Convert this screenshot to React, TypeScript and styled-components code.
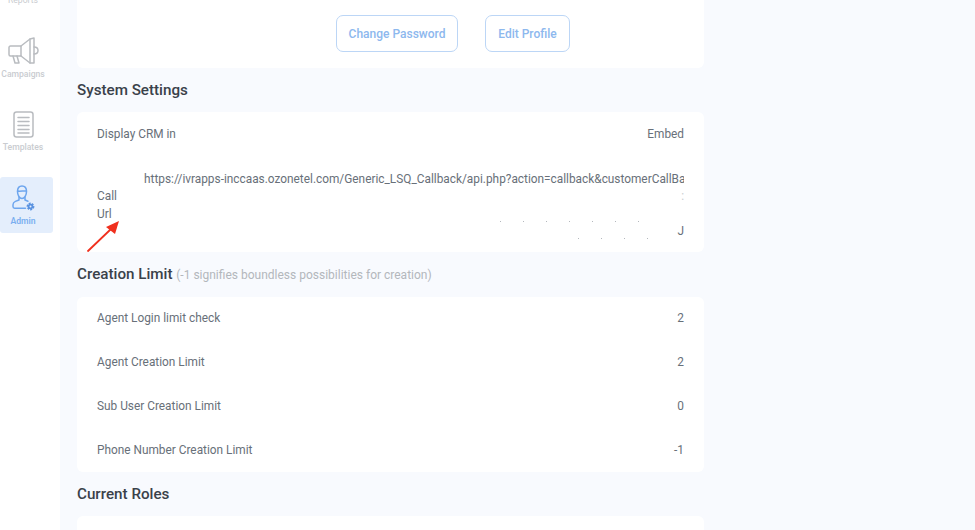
import React from "react";
import styled, { createGlobalStyle } from "styled-components";

const GlobalStyle = createGlobalStyle`
  html, body {
    margin: 0;
    padding: 0;
    background: #ffffff;
    font-family: Roboto, "Liberation Sans", sans-serif;
  }
`;

const creationLimits = [
  { label: "Agent Login limit check", value: "2" },
  { label: "Agent Creation Limit", value: "2" },
  { label: "Sub User Creation Limit", value: "0" },
  { label: "Phone Number Creation Limit", value: "-1" },
];

function CampaignIcon() {
  return (
    <svg width="31" height="28" viewBox="0 0 31 28" fill="none" stroke="#b9bcc0" strokeWidth="1.5" strokeLinejoin="round" strokeLinecap="round">
      <path d="M13 9 L2.5 9 C1.6 9 1 9.6 1 10.5 L1 17.5 C1 18.4 1.6 19 2.5 19 L13 19 Z" />
      <path d="M13 9 L22 2 L26 1 L26 26 L22 26 L13 19" />
      <path d="M22 2 L22 26" />
      <path d="M26 10 C29 10 30 12 30 13.5 C30 15 29 17 26 17" />
      <path d="M5 19 L7 26 L11 26 L9 19" />
    </svg>
  );
}

function TemplateIcon() {
  return (
    <svg width="21" height="27" viewBox="0 0 21 27" fill="none" stroke="#b9bcc0" strokeWidth="1.5" strokeLinecap="round">
      <rect x="1" y="1" width="19" height="25" rx="2.5" />
      <path d="M5 6.5 H16 M5 10.5 H16 M5 14.5 H16 M5 18.5 H16 M5 22 H16" />
    </svg>
  );
}

function AdminIcon() {
  return (
    <svg width="23" height="27" viewBox="0 0 23 27" fill="none" stroke="#6ea6ee" strokeWidth="1.5" strokeLinecap="round" strokeLinejoin="round">
      <path d="M5.5 6.5 C5.5 3 7.4 1 10 1 C12.6 1 14.5 3 14.5 6.5 C14.5 10.5 12.4 13.5 10 13.5 C7.6 13.5 5.5 10.5 5.5 6.5 Z" />
      <path d="M5.6 6 C8 6.6 12 5.6 14.4 6" />
      <path d="M7 12.5 L7 15 L3.4 16.4 C2 17 1 18.2 1 19.8 L1 21.5 C1 22.6 1.8 23.2 2.6 23.2 L13.5 23.2" />
      <path d="M13 12.5 L13 15 L16 16.2" />
      <circle cx="18.5" cy="21.5" r="2.8" fill="#5b93e0" stroke="#5b93e0" strokeWidth="2.2" strokeDasharray="1.8 1" strokeLinecap="butt" />
      <circle cx="18.5" cy="21.5" r="1" fill="#e4eefc" stroke="none" />
    </svg>
  );
}

function ArrowMark() {
  return (
    <svg width="33" height="32" viewBox="0 0 33 32" fill="none">
      <path d="M1 31 L24 9" stroke="#f0301e" strokeWidth="1.8" strokeLinecap="round" />
      <path d="M32 1 L28 14 L19 7 Z" fill="#f0301e" />
    </svg>
  );
}

export default function App() {
  return (
    <Page>
      <GlobalStyle />
      <Sidebar>
        <ClippedLabel>Reports</ClippedLabel>
        <NavItem $height={74}>
          <CampaignIcon />
          <NavLabel>Campaigns</NavLabel>
        </NavItem>
        <NavItem $height={66}>
          <TemplateIcon />
          <NavLabel>Templates</NavLabel>
        </NavItem>
        <NavItem $height={56} $active>
          <AdminIcon />
          <NavLabel $active>Admin</NavLabel>
        </NavItem>
      </Sidebar>
      <Main>
        <ActionCard>
          <OutlineButton>Change Password</OutlineButton>
          <OutlineButton $narrow>Edit Profile</OutlineButton>
        </ActionCard>

        <SectionTitle>System Settings</SectionTitle>
        <SettingsCard>
          <Row>
            <RowLabel>Display CRM in</RowLabel>
            <RowValue>Embed</RowValue>
          </Row>
          <UrlRow>
            <UrlLabel>
              Call
              <br />
              Url
              <ArrowHolder>
                <ArrowMark />
              </ArrowHolder>
            </UrlLabel>
            <UrlValue>
              <UrlLine>https://ivrapps-inccaas.ozonetel.com/Generic_LSQ_Callback/api.php?action=callback&amp;customerCallBa</UrlLine>
              <UrlLine $right $faint>:</UrlLine>
              <UrlLine $specks={160} />
              <UrlLine $right $specks={82}>J</UrlLine>
            </UrlValue>
          </UrlRow>
        </SettingsCard>

        <SectionTitle $tall>
          Creation Limit <SectionHint>(-1 signifies boundless possibilities for creation)</SectionHint>
        </SectionTitle>
        <LimitsCard>
          {creationLimits.map((item) => (
            <Row key={item.label}>
              <RowLabel>{item.label}</RowLabel>
              <RowValue>{item.value}</RowValue>
            </Row>
          ))}
        </LimitsCard>

        <SectionTitle>Current Roles</SectionTitle>
        <RolesCard />
      </Main>
    </Page>
  );
}

const Page = styled.div`
  display: flex;
  width: 975px;
  height: 530px;
  overflow: hidden;
  background: #f8fafe;
`;

const Sidebar = styled.nav`
  flex: 0 0 60px;
  box-sizing: border-box;
  padding-right: 7px;
  background: #ffffff;
  display: flex;
  flex-direction: column;
  align-items: stretch;
`;

const ClippedLabel = styled.div`
  height: 4px;
  line-height: 0;
  font-size: 8.6px;
  color: #c9ccd0;
  text-align: center;
  padding-right: 7px;
  margin-bottom: 33px;
`;

const NavItem = styled.div<{ $active?: boolean; $height: number }>`
  height: ${(p) => p.$height}px;
  flex: none;
  box-sizing: border-box;
  display: flex;
  flex-direction: column;
  align-items: center;
  gap: 4px;
  padding: ${(p) => (p.$active ? "8px" : "0")} 7px 0 0;
  border-radius: 3px;
  background: ${(p) => (p.$active ? "#e4eefc" : "transparent")};
`;

const NavLabel = styled.span<{ $active?: boolean }>`
  font-size: 8.6px;
  line-height: 10px;
  white-space: nowrap;
  font-weight: ${(p) => (p.$active ? 600 : 500)};
  color: ${(p) => (p.$active ? "#7aaef0" : "#c9ccd0")};
`;

const Main = styled.main`
  flex: 1;
  min-width: 0;
  box-sizing: border-box;
  padding: 0 271px 0 17px;
`;

const Card = styled.section`
  background: #ffffff;
  border-radius: 6px;
`;

const ActionCard = styled(Card)`
  height: 68px;
  box-sizing: border-box;
  padding: 15px 134px 0 0;
  display: flex;
  justify-content: flex-end;
  align-items: flex-start;
  gap: 27px;
  border-radius: 0 0 6px 6px;
`;

const OutlineButton = styled.button<{ $narrow?: boolean }>`
  width: ${(p) => (p.$narrow ? "85px" : "122px")};
  height: 37px;
  padding: 0;
  background: #ffffff;
  border: 1.5px solid #bcd6f6;
  border-radius: 7px;
  font-family: inherit;
  font-size: 12px;
  font-weight: 500;
  color: #8db8ee;
`;

const SectionTitle = styled.h2<{ $tall?: boolean }>`
  margin: 0;
  height: ${(p) => (p.$tall ? "45px" : "44px")};
  line-height: 44px;
  font-size: 15.2px;
  font-weight: 500;
  color: #3a414a;
`;

const SectionHint = styled.span`
  font-size: 12px;
  font-weight: 400;
  color: #b3b7bc;
`;

const SettingsCard = styled(Card)`
  height: 140px;
  padding: 0 20px;
`;

const LimitsCard = styled(Card)`
  display: flow-root;
  height: 175px;
  padding: 0 20px;
  & > :first-child {
    margin-top: -1px;
  }
`;

const RolesCard = styled(Card)`
  height: 40px;
`;

const Row = styled.div`
  height: 44px;
  display: flex;
  align-items: center;
  justify-content: space-between;
`;

const RowLabel = styled.span`
  font-size: 11.85px;
  color: #687079;
`;

const RowValue = styled.span`
  font-size: 11.85px;
  color: #687079;
`;

const UrlRow = styled.div`
  display: flex;
  align-items: center;
  height: 96px;
  padding-top: 3px;
  box-sizing: border-box;
`;

const UrlLabel = styled.div`
  position: relative;
  flex: 0 0 47px;
  font-size: 11.85px;
  line-height: 17.5px;
  color: #687079;
`;

const ArrowHolder = styled.span`
  position: absolute;
  left: -10px;
  top: 32px;
  line-height: 0;
`;

const UrlValue = styled.div`
  flex: 1;
  min-width: 0;
`;

const UrlLine = styled.div<{ $right?: boolean; $faint?: boolean; $specks?: number }>`
  height: 17.5px;
  line-height: 17.5px;
  font-size: 11.85px;
  white-space: nowrap;
  overflow: hidden;
  text-align: ${(p) => (p.$right ? "right" : "left")};
  color: ${(p) => (p.$faint ? "#c9ccd0" : "#687079")};
  ${(p) =>
    p.$specks
      ? `background: repeating-linear-gradient(90deg, #b4b8bd 0 1px, transparent 1px 23px) right 24px top 15px / ${p.$specks}px 1px no-repeat;`
      : ""}
`;
